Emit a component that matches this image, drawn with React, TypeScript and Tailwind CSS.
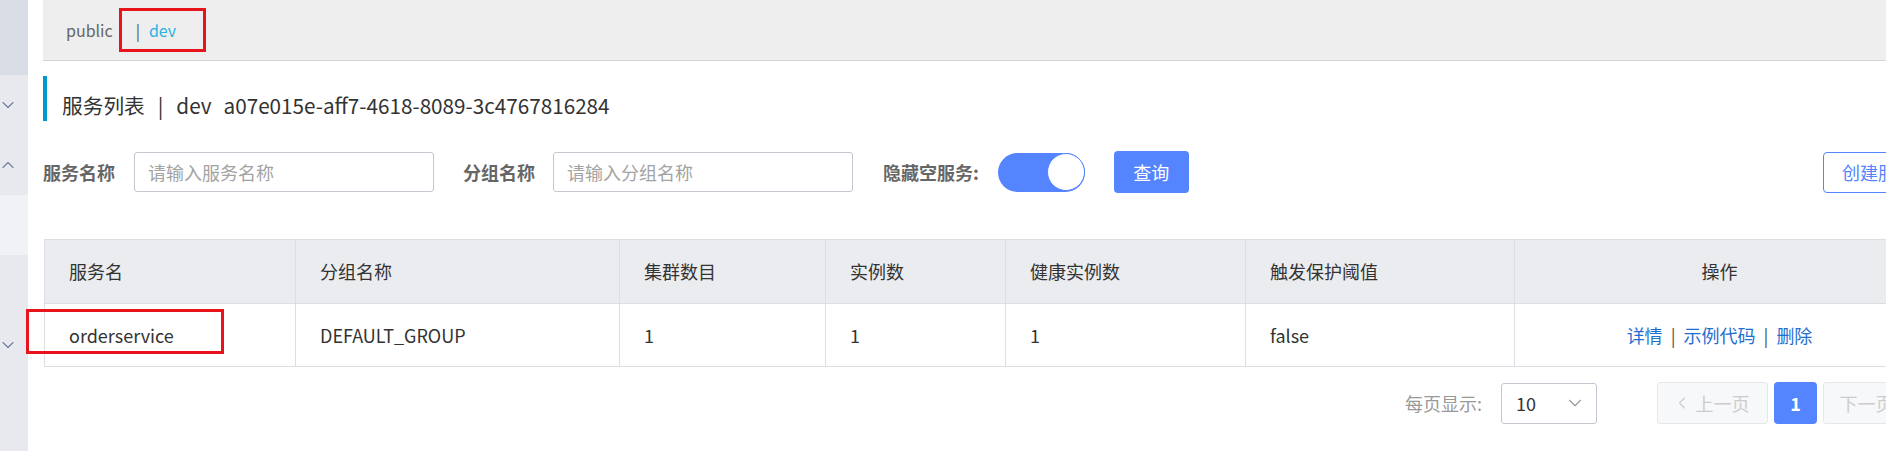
import { ChevronDown, ChevronUp, ChevronLeft, ChevronRight } from "lucide-react";

// =====================================================
// TABLE CONFIGURATION
// =====================================================
const columns = [
  { id: "name", label: "服务名" },
  { id: "group", label: "分组名称" },
  { id: "clusters", label: "集群数目" },
  { id: "instances", label: "实例数" },
  { id: "healthy", label: "健康实例数" },
  { id: "threshold", label: "触发保护阈值" },
];

const rows = [
  {
    name: "orderservice",
    group: "DEFAULT_GROUP",
    clusters: "1",
    instances: "1",
    healthy: "1",
    threshold: "false",
  },
];

function Sidebar() {
  return (
    <aside className="w-[28px] h-full flex flex-col flex-shrink-0">
      <div className="h-[75px] bg-[#d9dde5]" />
      <div className="h-[120px] bg-[#e7e9ef] flex flex-col items-start -ml-[2px]">
        <ChevronDown className="w-[20px] h-[20px] mt-[20px] text-[#6f7d99]" strokeWidth={1.3} />
        <ChevronUp className="w-[20px] h-[20px] mt-[40px] text-[#6f7d99]" strokeWidth={1.3} />
      </div>
      <div className="h-[60px] bg-[#f1f2f6]" />
      <div className="flex-1 bg-[#e7e9ef] flex flex-col items-start -ml-[2px]">
        <ChevronDown className="w-[20px] h-[20px] mt-[80px] text-[#6f7d99]" strokeWidth={1.3} />
      </div>
    </aside>
  );
}

function FilterBar() {
  return (
    <div className="mt-[30px] h-[42px] flex items-center whitespace-nowrap">
      <span className="flex-shrink-0 text-[18px] font-bold text-[#666]">服务名称</span>
      <div className="flex-shrink-0 ml-[19px] w-[300px] h-[40px] border border-[#c4c6cf] rounded-[3px] flex items-center pl-[13px]">
        <span className="text-[18px] text-[#a3a3a3]">请输入服务名称</span>
      </div>

      <span className="flex-shrink-0 ml-[29px] text-[18px] font-bold text-[#666]">分组名称</span>
      <div className="flex-shrink-0 ml-[18px] w-[300px] h-[40px] border border-[#c4c6cf] rounded-[3px] flex items-center pl-[13px]">
        <span className="text-[18px] text-[#a3a3a3]">请输入分组名称</span>
      </div>

      <span className="flex-shrink-0 ml-[30px] text-[18px] font-bold text-[#666]">隐藏空服务:</span>

      {/* switch (on) */}
      <div className="flex-shrink-0 ml-[19px] w-[87px] h-[39px] rounded-full bg-[#5584ff] flex items-center justify-end">
        <div className="w-[38px] h-[38px] rounded-full bg-white border border-[#5584ff]" />
      </div>

      <button className="flex-shrink-0 ml-[29px] w-[75px] h-[42px] rounded-[4px] bg-[#5584ff] text-white text-[18px]">
        查询
      </button>

      <button className="flex-shrink-0 ml-auto h-[41px] px-[18px] rounded-[4px] border border-[#5584ff] bg-white text-[#5584ff] text-[18px]">
        创建服务
      </button>
    </div>
  );
}

function ServiceTable() {
  return (
    <div className="mt-[46px] ml-px w-[1881px] border-l border-t border-[#dcdee3] grid grid-cols-[251px_324px_206px_180px_240px_269px_410px] text-[18px] text-[#333]">
      {columns.map(col => (
        <div
          key={col.id}
          className="h-[64px] px-6 flex items-center bg-[#ebecf0] border-r border-b border-[#dcdee3]"
        >
          {col.label}
        </div>
      ))}
      <div className="h-[64px] flex items-center justify-center bg-[#ebecf0] border-r border-b border-[#dcdee3]">
        操作
      </div>

      {rows.map(row => (
        <>
          {columns.map(col => (
            <div
              key={row.name + col.id}
              className="h-[63px] px-6 flex items-center border-r border-b border-[#dcdee3]"
            >
              {row[col.id as keyof typeof row]}
            </div>
          ))}
          <div className="h-[63px] flex items-center justify-center border-r border-b border-[#dcdee3]">
            <span className="text-[#1f6fd0]">详情</span>
            <span className="mx-[8px] text-[#555]">|</span>
            <span className="text-[#1f6fd0]">示例代码</span>
            <span className="mx-[8px] text-[#555]">|</span>
            <span className="text-[#1f6fd0]">删除</span>
          </div>
        </>
      ))}
    </div>
  );
}

function Pagination() {
  return (
    <div className="mt-[15px] h-[42px] flex items-center pl-[1362px] text-[18px] whitespace-nowrap">
      <span className="flex-shrink-0 text-[#999]">每页显示:</span>
      <div className="ml-[19px] w-[96px] h-[41px] border border-[#c4c6cf] rounded-[3px] flex items-center justify-between pl-[14px] pr-[10px] flex-shrink-0">
        <span className="text-[#333]">10</span>
        <ChevronDown className="w-[22px] h-[22px] text-[#999]" strokeWidth={1.2} />
      </div>

      <div className="ml-[60px] w-[111px] h-[42px] border border-[#e6e7eb] bg-[#f7f8fa] rounded-[3px] flex items-center justify-center text-[#ccc] flex-shrink-0">
        <ChevronLeft className="w-[20px] h-[20px] -ml-[4px]" strokeWidth={1.3} />
        <span className="ml-[4px]">上一页</span>
      </div>
      <div className="ml-[6px] w-[43px] h-[42px] rounded-[4px] bg-[#5584ff] text-white font-bold flex items-center justify-center flex-shrink-0">
        1
      </div>
      <div className="ml-[6px] w-[111px] h-[42px] border border-[#e6e7eb] bg-[#f7f8fa] rounded-[3px] flex items-center justify-center text-[#ccc] flex-shrink-0">
        <span>下一页</span>
        <ChevronRight className="w-[20px] h-[20px] ml-[4px]" strokeWidth={1.3} />
      </div>
    </div>
  );
}

export default function App() {
  return (
    <div className="relative w-[1886px] h-[451px] overflow-hidden bg-white flex font-['Noto_Sans_CJK_SC',sans-serif]">
      <Sidebar />

      <main className="ml-[15px] w-[1890px] flex-shrink-0 flex flex-col">
        {/* ================= NAMESPACE BAR ================= */}
        <div className="h-[61px] bg-[#eeeeee] border-b border-[#d4d4d4] flex items-center pl-[23px] text-[16px] flex-shrink-0">
          <span className="text-[#666]">public</span>
          <span className="ml-[23px] text-[#555]">|</span>
          <span className="ml-[9px] text-[#2ab3e3]">dev</span>
        </div>

        {/* ================= TITLE ================= */}
        <div className="mt-[15px] h-[45px] border-l-4 border-[#0099cc] pl-[15px] pt-[17px] flex-shrink-0">
          <div className="text-[20.7px] leading-[24px] text-[#333] whitespace-nowrap flex">
            <span>服务列表</span>
            <span className="mx-[13px]">|</span>
            <span>dev</span>
            <span className="ml-[12px]">a07e015e-aff7-4618-8089-3c4767816284</span>
          </div>
        </div>

        <FilterBar />
        <ServiceTable />
        <Pagination />
      </main>

      {/* ================= ANNOTATIONS ================= */}
      <div className="absolute left-[119px] top-[8px] w-[87px] h-[44px] border-[3px] border-[#e8141c]" />
      <div className="absolute left-[26px] top-[309px] w-[198px] h-[45px] border-[3px] border-[#e8141c]" />
    </div>
  );
}
